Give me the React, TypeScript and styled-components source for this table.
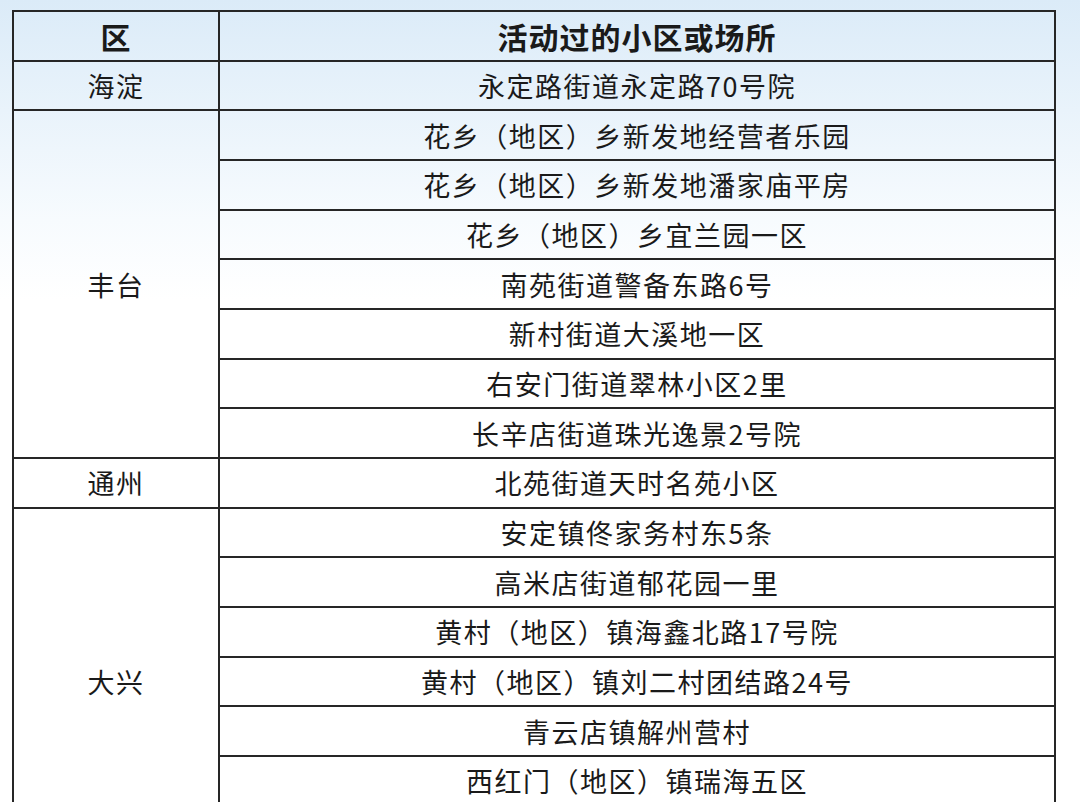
import React from 'react';
import styled, { createGlobalStyle } from 'styled-components';

const GlobalStyle = createGlobalStyle`
  html, body {
    margin: 0;
    padding: 0;
    background: #ffffff;
  }
  body {
    font-family: "Noto Sans CJK SC", "Noto Sans", sans-serif;
  }
`;

const Page = styled.div`
  width: 1080px;
  height: 802px;
  overflow: hidden;
  padding: 10px 0 0 12px;
  box-sizing: border-box;
  background: linear-gradient(180deg, #dbebf8 0px, #e9f3fb 110px, #f7fbfe 220px, #ffffff 300px);
`;

const Table = styled.table`
  width: 1044px;
  border-collapse: collapse;
  table-layout: fixed;
  color: #1a1a1a;
`;

const Row = styled.tr`
  height: 49.67px;
`;

const HeadCell = styled.th<{ $w?: number }>`
  width: ${(p) => (p.$w ? `${p.$w}px` : 'auto')};
  border: 2px solid #262626;
  font-size: 30px;
  font-weight: 700;
  text-align: center;
  padding: 0;
  line-height: 1;
  letter-spacing: 1px;
`;

const Cell = styled.td`
  border: 2px solid #262626;
  font-size: 27px;
  font-weight: 400;
  text-align: center;
  vertical-align: middle;
  padding: 0;
  line-height: 1;
  letter-spacing: 1.5px;
  white-space: nowrap;
`;

type Group = { district: string; places: string[] };

const groups: Group[] = [
  { district: '海淀', places: ['永定路街道永定路70号院'] },
  {
    district: '丰台',
    places: [
      '花乡（地区）乡新发地经营者乐园',
      '花乡（地区）乡新发地潘家庙平房',
      '花乡（地区）乡宜兰园一区',
      '南苑街道警备东路6号',
      '新村街道大溪地一区',
      '右安门街道翠林小区2里',
      '长辛店街道珠光逸景2号院',
    ],
  },
  { district: '通州', places: ['北苑街道天时名苑小区'] },
  {
    district: '大兴',
    places: [
      '安定镇佟家务村东5条',
      '高米店街道郁花园一里',
      '黄村（地区）镇海鑫北路17号院',
      '黄村（地区）镇刘二村团结路24号',
      '青云店镇解州营村',
      '西红门（地区）镇瑞海五区',
      '',
    ],
  },
];

export default function App() {
  return (
    <>
      <GlobalStyle />
      <Page>
        <Table>
          <thead>
            <Row>
              <HeadCell $w={204}>区</HeadCell>
              <HeadCell>活动过的小区或场所</HeadCell>
            </Row>
          </thead>
          <tbody>
            {groups.map((g) =>
              g.places.map((place, i) => (
                <Row key={g.district + i}>
                  {i === 0 && <Cell rowSpan={g.places.length}>{g.district}</Cell>}
                  <Cell>{place}</Cell>
                </Row>
              ))
            )}
          </tbody>
        </Table>
      </Page>
    </>
  );
}
